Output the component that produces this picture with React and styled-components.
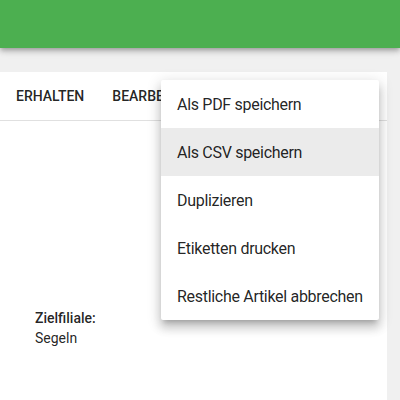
import React from 'react';
import styled, { createGlobalStyle } from 'styled-components';

const GlobalStyle = createGlobalStyle`
  html, body {
    margin: 0;
    padding: 0;
    background-color: #f0f0f0;
    font-family: Roboto, "Liberation Sans", sans-serif;
    color: rgba(0, 0, 0, 0.87);
  }
`;

const AppBar = styled.header`
  height: 48px;
  background-color: #4caf50;
  box-shadow: 0 2px 4px -1px rgba(0,0,0,0.2), 0 4px 5px 0 rgba(0,0,0,0.14), 0 1px 10px 0 rgba(0,0,0,0.12);
  position: relative;
  z-index: 2;
`;

const Page = styled.main`
  padding: 24px 13px 0 0;
`;

const Card = styled.section`
  position: relative;
  background-color: #fff;
  min-height: 328px;
`;

const TabBar = styled.nav`
  display: flex;
  align-items: center;
  gap: 28px;
  height: 48px;
  padding-left: 16px;
  border-bottom: 1px solid #e0e0e0;
`;

const Tab = styled.span`
  font-size: 14px;
  font-weight: 500;
  letter-spacing: 0;
  text-transform: uppercase;
  color: rgba(0, 0, 0, 0.87);
`;

const Content = styled.div`
  padding: 187px 35px 0;
  font-size: 14px;
  line-height: 20px;
`;

const Label = styled.div`
  font-weight: 500;
`;

const Value = styled.div``;

const Menu = styled.ul`
  position: absolute;
  top: 8px;
  left: 161px;
  width: 218px;
  margin: 0;
  padding: 0;
  list-style: none;
  background-color: #fff;
  border-radius: 2px;
  box-shadow: 0 5px 5px -3px rgba(0,0,0,0.2), 0 8px 10px 1px rgba(0,0,0,0.14), 0 3px 14px 2px rgba(0,0,0,0.12);
  z-index: 3;
`;

const MenuItem = styled.li`
  height: 48px;
  display: flex;
  align-items: center;
  padding: 0 16px;
  font-size: 16px;
  letter-spacing: -0.3px;
  white-space: nowrap;
  color: rgba(0, 0, 0, 0.87);
  background-color: ${({ $active }) => ($active ? '#ebebeb' : 'transparent')};
`;

const items = [
  'Als PDF speichern',
  'Als CSV speichern',
  'Duplizieren',
  'Etiketten drucken',
  'Restliche Artikel abbrechen'
];

const App = () => {
  return (
    <>
      <GlobalStyle />
      <AppBar />
      <Page>
        <Card>
          <TabBar>
            <Tab>Erhalten</Tab>
            <Tab>Bearbeiten</Tab>
          </TabBar>
          <Content>
            <Label>Zielfiliale:</Label>
            <Value>Segeln</Value>
          </Content>
          <Menu>
            {items.map((item, i) => (
              <MenuItem key={item} $active={i === 1}>{item}</MenuItem>
            ))}
          </Menu>
        </Card>
      </Page>
    </>
  );
};

export default App;
